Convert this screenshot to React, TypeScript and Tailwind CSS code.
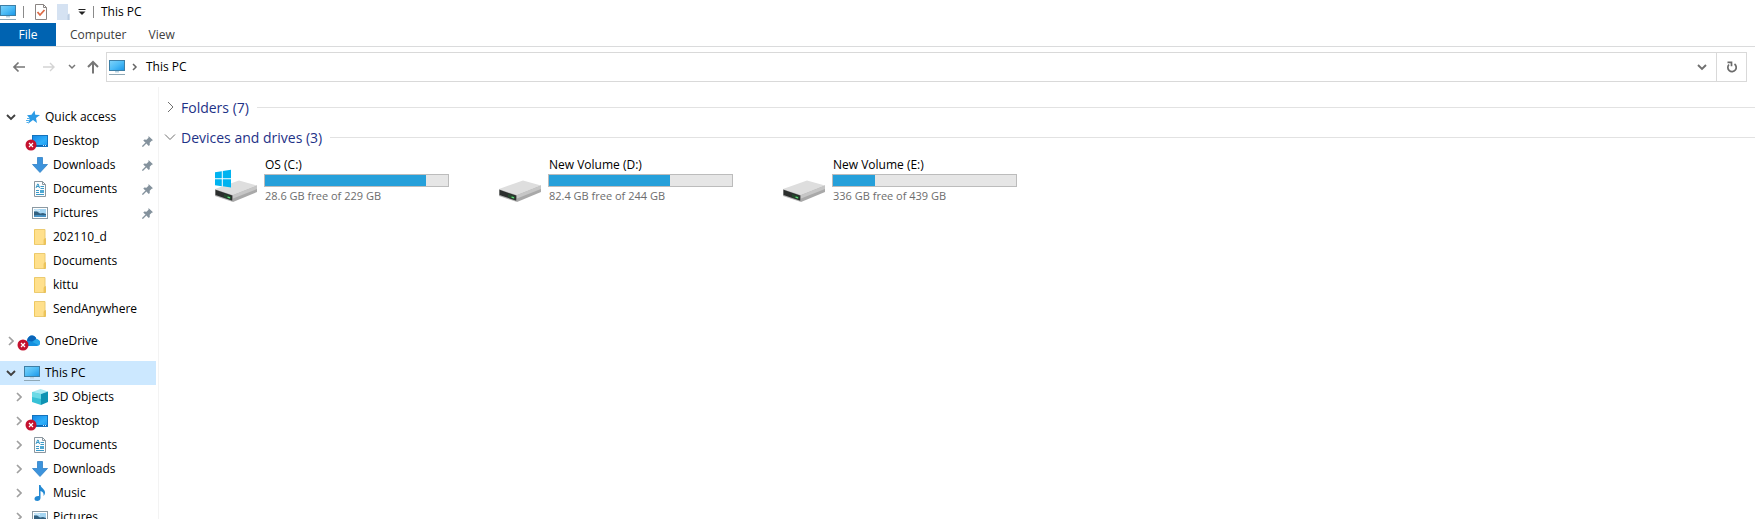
import type { ReactNode } from 'react'

type Item = {
  label: string
  icon: ReactNode
  error?: boolean
  pinned?: boolean
  expandable?: boolean
}

type Drive = {
  name: string
  detail: string
  used: number
  system?: boolean
}

function PcIcon() {
  return (
    <svg width="16" height="16" viewBox="0 0 16 16" className="shrink-0">
      <defs>
        <linearGradient id="pc" x1="0" y1="0" x2="1" y2="1">
          <stop offset="0" stopColor="#7fd3fa" />
          <stop offset="0.5" stopColor="#4dbcf6" />
          <stop offset="1" stopColor="#1795e8" />
        </linearGradient>
      </defs>
      <rect x="0.5" y="1.5" width="15" height="10" fill="url(#pc)" stroke="#3d7fa6" />
      <path d="M6 12h4v1.5H6z" fill="#b8d3e3" />
      <path d="M0 15.5h16" stroke="#8ea7b5" />
    </svg>
  )
}

function DesktopIcon() {
  return (
    <svg width="16" height="16" viewBox="0 0 16 16">
      <defs>
        <linearGradient id="desk" x1="0" y1="0" x2="1" y2="1">
          <stop offset="0" stopColor="#1485e6" />
          <stop offset="0.6" stopColor="#2fb0fa" />
          <stop offset="1" stopColor="#1b97ee" />
        </linearGradient>
      </defs>
      <rect x="0.5" y="2.5" width="15" height="11" fill="url(#desk)" stroke="#1473bd" />
      <path d="M1 12.5h14" stroke="#0a64b4" />
      <path d="M2 12.5h1M11 12.5h1M13 12.5h1" stroke="#cfeaff" />
    </svg>
  )
}

function DownloadIcon() {
  return (
    <svg width="16" height="16" viewBox="0 0 16 16">
      <path d="M5.5 0.5h5v7h5L8 15.5.5 7.5h5z" fill="#3c93dc" stroke="#3081c6" strokeWidth="0.8" />
    </svg>
  )
}

function DocumentIcon() {
  return (
    <svg width="16" height="16" viewBox="0 0 16 16">
      <path d="M2.5.5h8l3 3v12h-11z" fill="#fbfcfd" stroke="#8b979f" />
      <path d="M10.5.5v3h3" fill="none" stroke="#8b979f" />
      <path d="M4 7l1.600-4h.6L7.500 7M4.600 5.500h2.400M8.500 5.500H12M8.500 7.500H12M4 9.500h3M4 11.500h3M4 13.500h8" fill="none" stroke="#3a9ac8" />
      <path d="M8 9h4v3H8z" fill="#4ea8d2" />
    </svg>
  )
}

function PictureIcon() {
  return (
    <svg width="16" height="16" viewBox="0 0 16 16">
      <rect x="0.5" y="2.500" width="15" height="11" fill="#fff" stroke="#8c9aa3" />
      <path d="M2 4h12v8H2z" fill="#a5d5f2" />
      <path d="M2 6.500l3 0 3 2 3-.5 3 1V12H2z" fill="#33607f" />
      <path d="M2 10.500c4-1 8 0 12-.5v2H2z" fill="#4a93c4" />
      <path d="M2 5.500c2-1 4-.5 6 0" stroke="#e9f6fd" fill="none" />
    </svg>
  )
}

function FolderIcon() {
  return (
    <svg width="16" height="16" viewBox="0 0 16 16">
      <path d="M2 .5h11v9l1 1v5H2z" fill="#ffe08c" />
      <path d="M2 .5h1v15H2z" fill="#efc85c" />
      <path d="M2.500.5h10.500v9.500M2.500 15.500h10" fill="none" stroke="#ebcb72" />
      <path d="M12 10.500l1.500-1v6H12z" fill="#f5cc5a" stroke="#dfb54e" strokeWidth="0.6" />
    </svg>
  )
}

function CubeIcon() {
  return (
    <svg width="16" height="16" viewBox="0 0 16 16">
      <path d="M0 3l8.500-3L16 2.500 9 5z" fill="#a5e9f3" />
      <path d="M0 3l9 2v11l-9-3z" fill="#37c1d6" />
      <path d="M9 5l7-2.500V13l-7 3z" fill="#0f93b3" />
      <path d="M0 3l9 2v5L0 8z" fill="#6bdae6" />
    </svg>
  )
}

function MusicIcon() {
  return (
    <svg width="16" height="16" viewBox="0 0 16 16">
      <path d="M7 0h1.500c.4 3 4.500 4 4.500 7.500 0 1.500-.6 2.500-1.500 3.500.6-2.500-.5-4.500-3-5v7c0 2-1.500 3-3.300 3C3.500 16 2.500 15 2.500 13.700c0-1.700 1.700-2.900 4.500-2.700z" fill="#2389d3" />
    </svg>
  )
}

function StarIcon() {
  return (
    <svg width="16" height="16" viewBox="0 0 16 16">
      <path d="M10.500 1.500l.8 4.300 4.700.2-4 2.900 1 5-4-3-5 3.800 1.900-5.300L3 6.200l4.500-.4z" fill="#2b9be6" />
      <path d="M3 9.500h3M2 11.500h3M2.500 13.500h2" stroke="#4faeea" />
    </svg>
  )
}

function CloudIcon() {
  return (
    <svg width="16" height="16" viewBox="0 0 16 16">
      <path d="M3.500 13C0 13-.5 8.500 3 7.800 3.500 4.500 5.500 2.500 8 2.500c2.200 0 3.800 1.300 4.300 3.500C14.500 6.200 16 7.700 16 9.700c0 2-1.400 3.300-3.300 3.300z" fill="#1490df" />
      <path d="M3 7.800C3.500 4.500 5.500 2.500 8 2.500c2.200 0 3.800 1.300 4.300 3.500L8 8.500z" fill="#0a64b8" />
      <path d="M8.500 9l3.800-3C14.500 6.200 16 7.700 16 9.700c0 1-.4 1.900-1 2.500z" fill="#28a8ea" />
    </svg>
  )
}

function ErrorBadge() {
  return (
    <svg width="12" height="12" viewBox="0 0 12 12" className="absolute -left-[7px] top-[6px]">
      <circle cx="6" cy="6" r="5.500" fill="#c4122f" />
      <path d="M4 4l4 4M8 4l-4 4" stroke="#fff" strokeWidth="1.200" />
    </svg>
  )
}

function PinIcon() {
  return (
    <svg width="11" height="11" viewBox="0 0 11 11" className="ml-auto mr-[3px]">
      <path d="M6.500 0L11 4.300l-1.300.4-2 2 .1 2.300-1 .9L1.300 4.500l1-1 2.200.2 2-2z" fill="#84929d" />
      <path d="M4 7L.4 10.600" stroke="#84929d" strokeWidth="1.300" />
    </svg>
  )
}

function ChevronRight({ className }: { className: string }) {
  return (
    <svg width="6" height="10" viewBox="0 0 6 10" className={className}>
      <path d="M1 1l4 4-4 4" fill="none" stroke="currentColor" strokeWidth="1.700" />
    </svg>
  )
}

function ChevronDown({ className }: { className: string }) {
  return (
    <svg width="10" height="7" viewBox="0 0 10 7" className={className}>
      <path d="M1 1l4 4 4-4" fill="none" stroke="currentColor" strokeWidth="1.900" />
    </svg>
  )
}

function DriveIcon({ system }: { system?: boolean }) {
  return (
    <svg width="44" height="34" viewBox="0 0 44 34" className="mt-[13px] shrink-0">
      <path d="M1 20L25 11.500 43 16.500 19 26z" fill="#dedede" />
      <path d="M1 20l18 6v7L1 27z" fill="#b4b4b4" />
      <path d="M19 26l24-9.500v6.500L19 33z" fill="#a9a9a9" />
      <path d="M19 26l24-9.500v3.500L19 29.500z" fill="#c6c6c6" />
      <path d="M1.500 20.800l16.800 5.800v5.100L1.500 26z" fill="#2b2e2d" />
      <path d="M10 25l7 2.500v3l-7-2.500z" fill="#24482c" />
      <path d="M13.500 28l2.500.9" stroke="#5fe07a" strokeWidth="1.300" />
      {system && (
        <path d="M1 3.200l6.800-1v7H1zM8.800 2L17 .8v8.400H8.800zM1 10.200h6.800v7L1 16.200zM8.800 10.200H17v8.300l-8.200-1.200z" fill="#00b3f0" />
      )}
    </svg>
  )
}

const quickAccess: Item[] = [
  { label: 'Desktop', icon: <DesktopIcon />, error: true, pinned: true },
  { label: 'Downloads', icon: <DownloadIcon />, pinned: true },
  { label: 'Documents', icon: <DocumentIcon />, pinned: true },
  { label: 'Pictures', icon: <PictureIcon />, pinned: true },
  { label: '202110_d', icon: <FolderIcon /> },
  { label: 'Documents', icon: <FolderIcon /> },
  { label: 'kittu', icon: <FolderIcon /> },
  { label: 'SendAnywhere', icon: <FolderIcon /> },
]

const thisPc: Item[] = [
  { label: '3D Objects', icon: <CubeIcon />, expandable: true },
  { label: 'Desktop', icon: <DesktopIcon />, error: true, expandable: true },
  { label: 'Documents', icon: <DocumentIcon />, expandable: true },
  { label: 'Downloads', icon: <DownloadIcon />, expandable: true },
  { label: 'Music', icon: <MusicIcon />, expandable: true },
  { label: 'Pictures', icon: <PictureIcon />, expandable: true },
]

const drives: Drive[] = [
  { name: 'OS (C:)', detail: '28.6 GB free of 229 GB', used: 88, system: true },
  { name: 'New Volume (D:)', detail: '82.4 GB free of 244 GB', used: 66 },
  { name: 'New Volume (E:)', detail: '336 GB free of 439 GB', used: 23 },
]

function RootRow({ label, icon, open, error, active }: { label: string; icon: ReactNode; open?: boolean; error?: boolean; active?: boolean }) {
  return (
    <div className={active ? 'flex h-6 items-center bg-[#cce8ff]' : 'flex h-6 items-center'}>
      <button aria-label={`Toggle ${label}`} className="flex w-6 shrink-0 justify-center pr-[2px]">
        {open ? <ChevronDown className="text-[#404040]" /> : <ChevronRight className="text-[#a0a0a0]" />}
      </button>
      <a href="#" className="flex flex-1 items-center gap-[5px]">
        <span className="relative">
          {icon}
          {error && <ErrorBadge />}
        </span>
        {label}
      </a>
    </div>
  )
}

function ChildRow({ item }: { item: Item }) {
  return (
    <div className="flex h-6 items-center">
      <div className="flex w-8 shrink-0 justify-end pr-[10px]">
        {item.expandable && (
          <button aria-label={`Expand ${item.label}`}>
            <ChevronRight className="text-[#a0a0a0]" />
          </button>
        )}
      </div>
      <a href="#" className="flex flex-1 items-center gap-[5px]">
        <span className="relative">
          {item.icon}
          {item.error && <ErrorBadge />}
        </span>
        {item.label}
        {item.pinned && <PinIcon />}
      </a>
    </div>
  )
}

function GroupHeader({ title, open }: { title: string; open?: boolean }) {
  return (
    <div className="flex h-[30px] items-center">
      <button className="flex items-center text-[14px] text-[#1e3287]">
        <span className="flex w-[22px] justify-center">
          <svg width="12" height="12" viewBox="0 0 12 12">
            <path d={open ? 'M1 3.500l5 5 5-5' : 'M4 1l5 5-5 5'} fill="none" stroke="#707070" />
          </svg>
        </span>
        {title}
      </button>
      <div className="ml-2 h-px flex-1 bg-[#e2e2e2]" />
    </div>
  )
}

function DriveTile({ drive }: { drive: Drive }) {
  return (
    <a href="#" className="flex w-[284px] gap-[6px]">
      <DriveIcon system={drive.system} />
      <div className="w-[185px]">
        <p className="h-[18px] pl-px leading-[18px]">{drive.name}</p>
        <div
          role="progressbar"
          aria-label={drive.name}
          aria-valuenow={drive.used}
          className="h-[13px] border border-[#bcbcbc] bg-[#e6e6e6]"
        >
          <div className="h-full bg-[#26a0da]" style={{ width: `${drive.used}%` }} />
        </div>
        <p className="h-[18px] pl-px text-[11px] leading-[18px] text-[#6d6d6d]">{drive.detail}</p>
      </div>
    </a>
  )
}

export default function App() {
  return (
    <div className="flex h-screen flex-col overflow-hidden bg-white font-['Open_Sans',sans-serif] text-[12px] text-black">
      <header className="flex h-[23px] shrink-0 items-center">
        <PcIcon />
        <span className="ml-[7px] h-3 w-px bg-[#8a8a8a]" />
        <button aria-label="Properties" className="ml-2">
          <svg width="18" height="18" viewBox="0 0 18 18">
            <path d="M3.500 1.500h8l3 3v12h-11z" fill="#fff" stroke="#8a8583" />
            <path d="M11.500 1.500v3h3" fill="none" stroke="#8a8583" />
            <path d="M5.500 9l2.500 3 4.500-5" fill="none" stroke="#dc6a45" strokeWidth="1.800" />
          </svg>
        </button>
        <button aria-label="New folder" className="ml-[6px]">
          <svg width="16" height="18" viewBox="0 0 16 18">
            <path d="M1 1h11v9.500l1.500 1V17H1z" fill="#d5e2f2" />
            <path d="M11.500 12l2-1.500V17h-2z" fill="#bccde2" />
          </svg>
        </button>
        <button aria-label="Customize toolbar" className="ml-[6px]">
          <svg width="8" height="8" viewBox="0 0 8 8">
            <path d="M.5 1.500h7" stroke="#222" />
            <path d="M.5 3.500h7L4 7z" fill="#222" />
          </svg>
        </button>
        <span className="ml-[7px] h-3 w-px bg-[#8a8a8a]" />
        <h1 className="ml-[7px]">This PC</h1>
      </header>

      <nav className="flex h-6 shrink-0 border-b border-[#dadbdc] text-[#404040]">
        <button className="w-14 bg-[#0063b1] text-white">File</button>
        <button className="pl-[14px] pr-2">Computer</button>
        <button className="pl-[14px] pr-2">View</button>
      </nav>

      <div className="flex h-10 shrink-0 items-center pr-2">
        <div className="flex w-[106px] shrink-0 items-center pl-3">
          <button aria-label="Back">
            <svg width="14" height="14" viewBox="0 0 14 14">
              <path d="M13 7H2M6.500 2.500L2 7l4.500 4.500" fill="none" stroke="#777" strokeWidth="1.700" />
            </svg>
          </button>
          <button aria-label="Forward" className="ml-4">
            <svg width="14" height="14" viewBox="0 0 14 14">
              <path d="M1 7h11M8 3l4 4-4 4" fill="none" stroke="#d4d4d4" strokeWidth="1.400" />
            </svg>
          </button>
          <button aria-label="Recent locations" className="ml-3">
            <svg width="8" height="6" viewBox="0 0 8 6">
              <path d="M1 1l3 3 3-3" fill="none" stroke="#777" strokeWidth="1.500" />
            </svg>
          </button>
          <button aria-label="Up" className="ml-[10px]">
            <svg width="14" height="14" viewBox="0 0 14 14">
              <path d="M7 13.500V2M2 7l5-5 5 5" fill="none" stroke="#777" strokeWidth="2" />
            </svg>
          </button>
        </div>
        <div className="flex h-[30px] flex-1 items-center border border-[#d9d9d9] pl-[2px]">
          <PcIcon />
          <button aria-label="Show locations" className="ml-[7px]">
            <svg width="6" height="8" viewBox="0 0 6 8">
              <path d="M1 1l3 3-3 3" fill="none" stroke="#666" strokeWidth="1.500" />
            </svg>
          </button>
          <button className="ml-2">This PC</button>
          <button aria-label="Previous locations" className="ml-auto mr-[9px]">
            <ChevronDown className="text-[#707070]" />
          </button>
          <button aria-label="Refresh" className="flex h-full w-[30px] items-center justify-center border-l border-[#d9d9d9]">
            <svg width="12" height="12" viewBox="0 0 12 12">
              <path d="M8.500 3A4.200 4.200 0 1 1 3 3.500" fill="none" stroke="#6b6b6b" strokeWidth="1.700" />
              <path d="M1.500 1.300h4V5.200" fill="none" stroke="#6b6b6b" strokeWidth="1.700" />
            </svg>
          </button>
        </div>
      </div>

      <div className="flex min-h-0 flex-1">
        <aside className="w-[159px] shrink-0 border-r border-[#f3f3f3] pr-[2px] pt-[18px]">
          <RootRow label="Quick access" icon={<StarIcon />} open />
          {quickAccess.map((item, i) => (
            <ChildRow key={i} item={item} />
          ))}
          <div className="py-2">
            <RootRow label="OneDrive" icon={<CloudIcon />} error />
          </div>
          <RootRow label="This PC" icon={<PcIcon />} open active />
          {thisPc.map((item) => (
            <ChildRow key={item.label} item={item} />
          ))}
        </aside>

        <main className="min-w-0 flex-1 pt-[5px]">
          <GroupHeader title="Folders (7)" />
          <GroupHeader title="Devices and drives (3)" open />
          <div className="flex flex-wrap pl-[55px] pt-1">
            {drives.map((drive) => (
              <DriveTile key={drive.name} drive={drive} />
            ))}
          </div>
        </main>
      </div>
    </div>
  )
}
